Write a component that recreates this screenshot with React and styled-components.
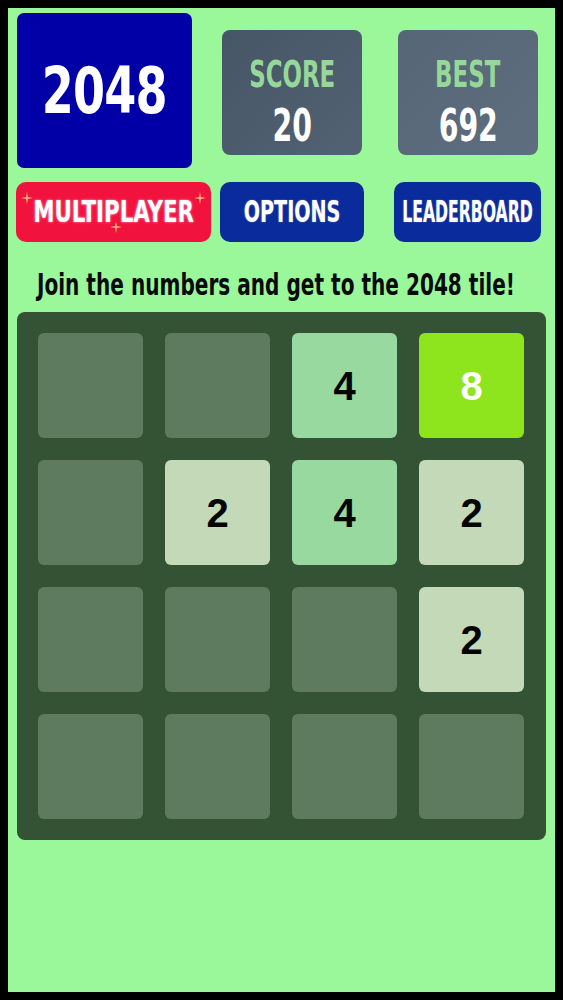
import React from "react";
import styled, { createGlobalStyle } from "styled-components";

const GlobalStyle = createGlobalStyle`
  html, body {
    margin: 0;
    padding: 0;
    background: #000;
  }
  body {
    font-family: "DejaVu Sans Condensed", "DejaVu Sans", sans-serif;
  }
`;

const Screen = styled.div`
  margin: 8px 8px 0 8px;
  height: 984px;
  background: #9af79a;
  display: flex;
  flex-direction: column;
`;

const Header = styled.div`
  display: flex;
  align-items: center;
  padding: 5px 0 0 9px;
`;

const Logo = styled.div`
  width: 175px;
  height: 155px;
  border-radius: 7px;
  background: #0000a6;
  color: #fff;
  display: flex;
  align-items: center;
  justify-content: center;
  font-weight: bold;
  font-size: 64px;
  letter-spacing: -1px;
`;

const Squeeze = styled.span`
  display: inline-block;
  transform: scaleX(${(p) => p.$x || 0.8});
  white-space: nowrap;
`;

const ScoreBox = styled.div`
  box-sizing: border-box;
  width: 140px;
  height: 125px;
  margin-top: 4px;
  margin-left: ${(p) => p.$gap}px;
  padding-top: 22px;
  border-radius: 8px;
  background: ${(p) =>
    p.$light
      ? "linear-gradient(135deg, #566676, #5e6e7e)"
      : "linear-gradient(135deg, #465666, #526272)"};
  display: flex;
  flex-direction: column;
  align-items: center;
  font-weight: bold;
`;

const ScoreLabel = styled.div`
  color: #96d898;
  font-size: 38px;
  line-height: 44px;
`;

const ScoreValue = styled.div`
  color: #fff;
  font-size: 45px;
  line-height: 50px;
  margin-top: 5px;
`;

const ButtonRow = styled.div`
  display: flex;
  align-items: center;
  padding: 14px 0 0 8px;
`;

const MenuButton = styled.button`
  position: relative;
  width: ${(p) => p.$w}px;
  height: 60px;
  margin-left: ${(p) => p.$gap || 0}px;
  border: none;
  border-radius: 10px;
  background: ${(p) => (p.$hot ? "#f2123e" : "#0a2b9c")};
  color: #fff;
  font-family: inherit;
  font-weight: bold;
  font-size: 30px;
  padding: 0 0 2px 0;
  display: flex;
  align-items: center;
  justify-content: center;
  text-shadow: ${(p) =>
    p.$hot ? "0 0 3px rgba(255, 200, 220, 0.8)" : "0 0 2px rgba(255, 255, 255, 0.4)"};
  overflow: visible;
`;

const Sparkle = styled.svg`
  position: absolute;
  width: 12px;
  height: 12px;
  left: ${(p) => p.$x}px;
  top: ${(p) => p.$y}px;
`;

const Tagline = styled.div`
  height: 70px;
  box-sizing: border-box;
  padding: 13px 11px 0 0;
  display: flex;
  align-items: center;
  justify-content: center;
  font-weight: bold;
  font-size: 31px;
  color: #0a0a0a;
`;

const Board = styled.div`
  margin: 0 9px 0 9px;
  padding: 21px;
  border-radius: 8px;
  background: #345234;
  display: grid;
  grid-template-columns: repeat(4, 105px);
  grid-auto-rows: 105px;
  gap: 22px 22px;
`;

const tileColors = {
  0: "#5f7b5f",
  2: "#c3d9b7",
  4: "#98d9a0",
  8: "#8fe51d",
};

const Tile = styled.div`
  border-radius: 6px;
  background: ${(p) => tileColors[p.$v]};
  color: ${(p) => (p.$v >= 8 ? "#fff" : "#050505")};
  display: flex;
  align-items: center;
  justify-content: center;
  font-family: "Liberation Sans", Arial, sans-serif;
  font-weight: bold;
  font-size: 40px;
  padding-top: 2px;
`;

const StarIcon = ({ x, y }) => (
  <Sparkle $x={x} $y={y} viewBox="0 0 12 12">
    <path
      d="M6 0 L7 5 L12 6 L7 7 L6 12 L5 7 L0 6 L5 5 Z"
      fill="#ffb070"
    />
  </Sparkle>
);

const grid = [
  [0, 0, 4, 8],
  [0, 2, 4, 2],
  [0, 0, 0, 2],
  [0, 0, 0, 0],
];

const App = () => {
  return (
    <>
      <GlobalStyle />
      <Screen>
        <Header>
          <Logo>
            <Squeeze $x={0.8}>2048</Squeeze>
          </Logo>
          <ScoreBox $gap={30}>
            <ScoreLabel>
              <Squeeze $x={0.67}>SCORE</Squeeze>
            </ScoreLabel>
            <ScoreValue>
              <Squeeze $x={0.7}>20</Squeeze>
            </ScoreValue>
          </ScoreBox>
          <ScoreBox $gap={36} $light>
            <ScoreLabel>
              <Squeeze $x={0.67}>BEST</Squeeze>
            </ScoreLabel>
            <ScoreValue>
              <Squeeze $x={0.7}>692</Squeeze>
            </ScoreValue>
          </ScoreBox>
        </Header>
        <ButtonRow>
          <MenuButton $w={195} $hot>
            <StarIcon x={5} y={10} />
            <StarIcon x={178} y={10} />
            <StarIcon x={94} y={39} />
            <Squeeze $x={0.79}>MULTIPLAYER</Squeeze>
          </MenuButton>
          <MenuButton $w={144} $gap={9}>
            <Squeeze $x={0.71}>OPTIONS</Squeeze>
          </MenuButton>
          <MenuButton $w={147} $gap={30}>
            <Squeeze $x={0.58}>LEADERBOARD</Squeeze>
          </MenuButton>
        </ButtonRow>
        <Tagline>
          <Squeeze $x={0.72}>Join the numbers and get to the 2048 tile!</Squeeze>
        </Tagline>
        <Board>
          {grid.flat().map((v, i) => (
            <Tile key={i} $v={v}>
              {v > 0 ? v : ""}
            </Tile>
          ))}
        </Board>
      </Screen>
    </>
  );
};

export default App;
